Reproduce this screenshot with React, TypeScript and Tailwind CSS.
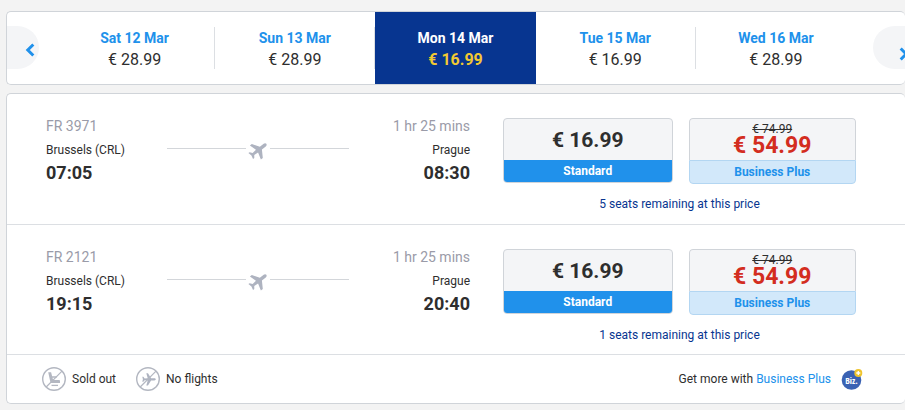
import React from "react";
import clsx from "clsx";

const DAYS = [
  { label: "Sat 12 Mar", price: "€ 28.99" },
  { label: "Sun 13 Mar", price: "€ 28.99" },
  { label: "Mon 14 Mar", price: "€ 16.99", selected: true },
  { label: "Tue 15 Mar", price: "€ 16.99" },
  { label: "Wed 16 Mar", price: "€ 28.99" },
];

const FLIGHTS = [
  {
    number: "FR 3971",
    from: "Brussels (CRL)",
    departs: "07:05",
    duration: "1 hr 25 mins",
    to: "Prague",
    arrives: "08:30",
    standard: "€ 16.99",
    oldBusiness: "€ 74.99",
    business: "€ 54.99",
    seats: 5,
  },
  {
    number: "FR 2121",
    from: "Brussels (CRL)",
    departs: "19:15",
    duration: "1 hr 25 mins",
    to: "Prague",
    arrives: "20:40",
    standard: "€ 16.99",
    oldBusiness: "€ 74.99",
    business: "€ 54.99",
    seats: 1,
  },
];

const PLANE =
  "M21.5 16.2v-2.6L13.8 8.8V3.6c0-1.1-.8-2.2-1.8-2.2s-1.8 1.1-1.8 2.2V8.8L2.5 13.6v2.6l7.7-2.2.4 4.8-2.6 2v1.7l4-1 4 1v-1.7l-2.6-2 .4-4.8z";

function Chevron({ flip }: { flip?: boolean }) {
  return (
    <svg viewBox="0 0 10 14" className={clsx("h-[14px] w-[10px] shrink-0", flip && "-scale-x-100")} aria-hidden="true">
      <path d="M8.3 1.5 2.8 7l5.5 5.5" fill="none" stroke="#2091eb" strokeWidth="3" />
    </svg>
  );
}

function PlaneIcon() {
  return (
    <svg viewBox="0 0 24 24" className="h-6 w-6 shrink-0" aria-hidden="true">
      <path d={PLANE} fill="#aeb3c0" transform="translate(12.5 14) rotate(52) scale(.94) translate(-12 -12)" />
    </svg>
  );
}

function SoldOutIcon() {
  return (
    <svg viewBox="0 0 24 24" className="h-6 w-6 shrink-0" fill="none" stroke="#b3b7c1" aria-hidden="true">
      <circle cx="12" cy="12" r="11.3" strokeWidth="1.4" />
      <path
        d="M6.2 5.2h2.9l1 4.1h4.6v1.4h-4.2l.6 2.4h5.9c.6 0 1 .5 1 1v1.9H10c-.9 0-1.5-.5-1.7-1.300z"
        fill="#b3b7c1"
        stroke="none"
      />
      <path d="M9.500 18.400h6.500" strokeWidth="1.300" />
      <path d="M4.200 20 20 4.200" strokeWidth="1.200" />
    </svg>
  );
}

function NoFlightsIcon() {
  return (
    <svg viewBox="0 0 24 24" className="h-6 w-6 shrink-0" fill="none" stroke="#b3b7c1" aria-hidden="true">
      <circle cx="12" cy="12" r="11.3" strokeWidth="1.4" />
      <path d={PLANE} fill="#aeb3c0" stroke="none" transform="translate(13 12.3) rotate(90) scale(.64) translate(-12 -12)" />
      <path d="M4.200 20 20 4.200" strokeWidth="1.200" />
    </svg>
  );
}

function BizIcon() {
  return (
    <svg viewBox="0 0 22 22" className="h-[22px] w-[22px] shrink-0" aria-hidden="true">
      <circle cx="10.5" cy="12" r="9.800" fill="#3a62b3" />
      <text
        x="10.5"
        y="15.5"
        textAnchor="middle"
        fill="#fff"
        fontSize="9"
        fontWeight="700"
        fontFamily="'Open Sans Condensed', 'Liberation Sans Narrow', 'Roboto Condensed', 'Noto Sans CJK SC', sans-serif"
      >
        Biz.
      </text>
      <circle cx="17.3" cy="5" r="4" fill="#efc42d" />
      <path d="M17.3 3v4M15.3 5h4" stroke="#fff" strokeWidth="1.3" />
    </svg>
  );
}

export default function App() {
  return (
    <div className="flex min-h-screen flex-col gap-2 bg-[#f3f3f3] pt-[11px] pb-[6px] pl-[6px] font-['Roboto',sans-serif] text-[#2e2e2e]">
      {/* Date carousel */}
      <nav className="flex h-[74px] items-stretch overflow-hidden rounded-[5px] border border-r-0 border-[#d0d4d9] bg-white">
        <button
          type="button"
          aria-label="Previous days"
          className="mt-[14px] flex h-[43px] w-8 shrink-0 items-center justify-end rounded-r-full bg-[#f4f5f7] pt-1 pr-1"
        >
          <Chevron />
        </button>
        <div className="ml-4 flex max-w-[801px] flex-1">
          {DAYS.map((day, i) => (
            <button
              key={day.label}
              type="button"
              className={clsx("flex flex-1 items-center", day.selected && "bg-[#073590]")}
            >
              <span
                className={clsx(
                  "flex h-[42px] flex-1 flex-col justify-center pt-1",
                  i !== DAYS.length - 1 && !day.selected && "border-r border-[#dcdfe3]"
                )}
              >
                <span className={clsx("text-sm leading-5 font-bold", day.selected ? "text-white" : "text-[#2091eb]")}>
                  {day.label}
                </span>
                <span className={clsx("text-base leading-6", day.selected && "font-bold text-[#f1c933]")}>
                  {day.price}
                </span>
              </span>
            </button>
          ))}
        </div>
        <button
          type="button"
          aria-label="Next days"
          className="mt-[14px] ml-auto flex h-[43px] w-8 shrink-0 items-center justify-end rounded-l-full bg-[#f4f5f7] pt-3"
        >
          <span className="-mr-1 flex">
            <Chevron flip />
          </span>
        </button>
      </nav>

      {/* Flights */}
      <main className="rounded-[5px] border border-r-0 border-[#d0d4d9] bg-white">
        {FLIGHTS.map((flight, i) => (
          <section
            key={flight.number}
            className={clsx("flex min-h-[130px] gap-[33px] pt-6 pr-[49px] pl-[39px]", i > 0 && "border-t border-[#dcdfe3]")}
          >
            <div className="flex flex-1 justify-between">
              <div className="w-[121px]">
                <p className="text-sm leading-4 text-[#9a9ba8]">{flight.number}</p>
                <p className="mt-2 text-xs leading-4">{flight.from}</p>
                <p className="mt-[3px] text-lg leading-6 font-bold">{flight.departs}</p>
              </div>
              <div className="mt-[18px] flex h-6 flex-1 items-center">
                <span className="h-px flex-1 bg-[#d3d6da]" />
                <PlaneIcon />
                <span className="h-px flex-1 bg-[#d3d6da]" />
              </div>
              <div className="w-[121px] text-right">
                <p className="text-sm leading-4 text-[#9a9ba8]">{flight.duration}</p>
                <p className="mt-2 text-xs leading-4">{flight.to}</p>
                <p className="mt-[3px] text-lg leading-6 font-bold">{flight.arrives}</p>
              </div>
            </div>

            <div className="w-[353px] shrink-0">
              <div className="flex items-start gap-4">
                <button type="button" className="flex-1 overflow-hidden rounded border border-[#d0d4d9] bg-[#f4f5f7]">
                  <span className="flex h-[41px] items-center justify-center pt-[2px] text-[21px] font-bold">
                    {flight.standard}
                  </span>
                  <span className="block bg-[#2091eb] text-xs leading-[22px] font-bold text-white">Standard</span>
                </button>
                <button type="button" className="flex-1 overflow-hidden rounded bg-[#f4f5f7]">
                  <span className="flex h-[42px] flex-col items-center rounded-t border border-b-0 border-[#d0d4d9] pt-1">
                    <s className="text-xs leading-3">{flight.oldBusiness}</s>
                    <span className="text-[23px] leading-[22px] font-bold text-[#d32d1f]">{flight.business}</span>
                  </span>
                  <span className="block rounded-b border border-[#b3d6f2] bg-[#d2e8fa] text-xs leading-[22px] font-bold text-[#2091eb]">
                    Business Plus
                  </span>
                </button>
              </div>
              <p className="mt-3 text-center text-xs leading-4 text-[#073590]">
                {flight.seats} seats remaining at this price
              </p>
            </div>
          </section>
        ))}

        <footer className="flex h-[49px] items-center justify-between border-t border-[#dcdfe3] pr-[42px] pl-[35px] text-xs">
          <div className="flex gap-5">
            <span className="flex items-center gap-[6px]">
              <SoldOutIcon /> Sold out
            </span>
            <span className="flex items-center gap-[6px]">
              <NoFlightsIcon /> No flights
            </span>
          </div>
          <div className="flex items-center gap-[10px]">
            <p>
              Get more with{" "}
              <a href="#business-plus" className="text-[#2091eb]">
                Business Plus
              </a>
            </p>
            <BizIcon />
          </div>
        </footer>
      </main>
    </div>
  );
}
